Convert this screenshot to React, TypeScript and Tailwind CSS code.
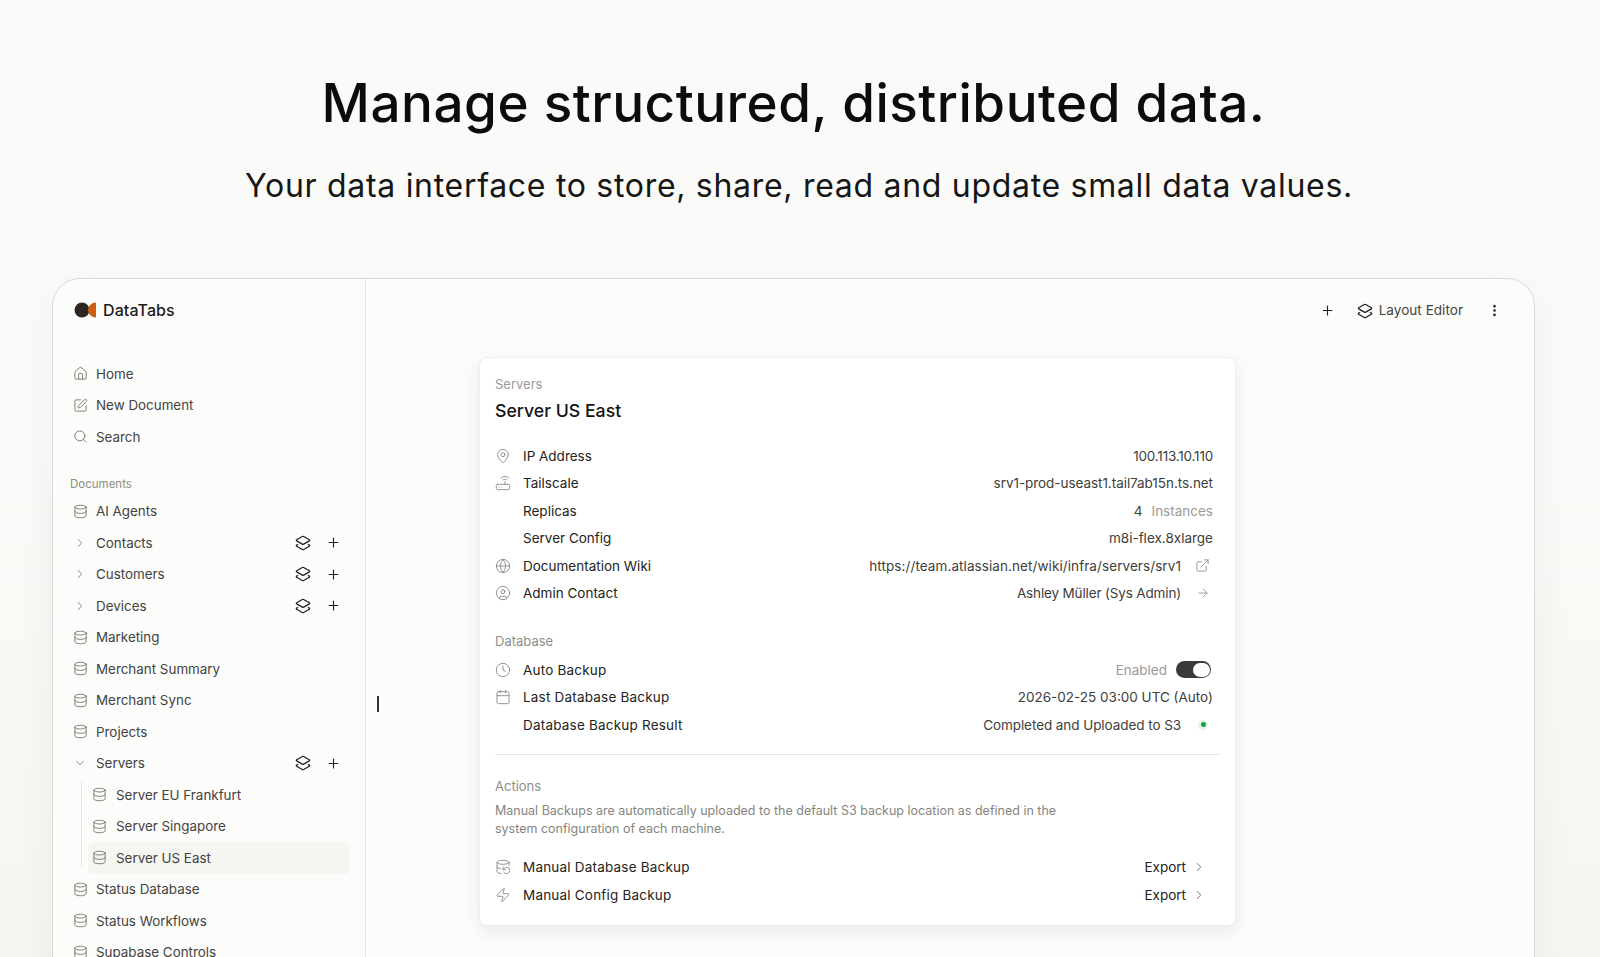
import React from "react";
import { House, SquarePen, Search, Database, ChevronRight, ChevronDown, Plus, MapPin, Router, Globe, CircleUser, ExternalLink, ArrowRight, Clock, Calendar, DatabaseBackup, Zap, EllipsisVertical, Layers2 } from "lucide-react";

const font = "font-['Inter',sans-serif]";

function NavRow({ icon: Icon, label, chevron, actions, indent, active }: any) {
  return (
    <div className={`relative flex h-[31.5px] items-center text-[13.4px] text-[#43433f] ${indent ? "pl-[9px]" : ""}`}>
      {active && <div className="absolute left-[5px] right-[15px] top-0 bottom-0 rounded-md bg-[#f5f5f1]" />}
      <span className={`relative flex w-[32px] shrink-0 justify-start ${indent ? "pl-[1px]" : ""}`}>
        <span className="ml-[-2px] flex w-[16px] justify-center">
          {Icon ? <Icon size={15} strokeWidth={1.5} className="text-[#77776f]" /> : chevron === "down" ? <ChevronDown size={14} strokeWidth={1.5} className="text-[#77776f]" /> : <ChevronRight size={14} strokeWidth={1.5} className="text-[#77776f]" />}
        </span>
      </span>
      <span className={`relative flex-1 ${indent ? "ml-[-8px]" : "ml-[-10px]"}`}>{label}</span>
      {actions && (
        <span className="relative mr-[24px] flex items-center gap-[15.5px] text-[#222220]">
          <Layers2 size={16} strokeWidth={1.9} />
          <Plus size={15} strokeWidth={1.8} />
        </span>
      )}
    </div>
  );
}

function Row({ icon: Icon, label, wide, children }: any) {
  return (
    <div className="flex h-[27.5px] items-center text-[13.5px]">
      <span className="ml-[-0.5px] mr-[1.5px] flex w-[27px] shrink-0">
        {Icon && <Icon size={16} strokeWidth={1.4} className="text-[#8d8d88]" />}
      </span>
      <span className={`flex-1 text-[#232321] ${wide ? "tracking-[0.2px]" : ""}`}>{label}</span>
      <span className="flex items-center text-[#40403b]">{children}</span>
    </div>
  );
}

export default function App() {
  return (
    <div className={`${font} relative flex h-[957px] flex-col items-center overflow-hidden bg-[#fafaf8]`}>
      <div className="absolute right-0 bottom-0 left-0 h-[500px] bg-gradient-to-b from-[#fafaf8] to-[#f5f5f2]" />
      <h1 className="relative mt-[69px] mr-[13px] text-[53px] leading-[68px] font-medium tracking-[0.5px] text-[#0c0c0c]">
        Manage structured, distributed data.
      </h1>
      <p className="relative mt-[27px] mr-[2px] text-[32px] leading-[44px] tracking-[0.7px] text-[#161616]">
        Your data interface to store, share, read and update small data values.
      </p>
      <div className="relative mt-[70px] ml-[52px] flex h-[800px] w-[1483px] shrink-0 self-start rounded-t-[28px] border border-[#d9d9d6] bg-[#fcfcfb] shadow-[0_10px_40px_rgba(0,0,0,0.05)]">
        <aside className="w-[313px] shrink-0 border-r border-[#e6e6e2] pl-[21px]">
          <div className="flex h-[61px] items-center gap-[6px]">
            <svg width="23" height="16" viewBox="0 0 23 16">
              <circle cx="8" cy="8" r="7.5" fill="#2d2523" />
              <path d="M22 0.5 V15.5 C18 15.5 14 12 14 8 C14 4 18 0.5 22 0.5 Z" fill="#cc5f12" />
            </svg>
            <span className="text-[16px] font-medium tracking-[0.1px] text-[#1c1c1a]">DataTabs</span>
          </div>
          <div className="mt-[18px]">
            <NavRow icon={House} label="Home" />
            <NavRow icon={SquarePen} label="New Document" />
            <NavRow icon={Search} label="Search" />
          </div>
          <div className="mt-[21px] mb-[2px] ml-[-4px] h-[20px] text-[11.5px] leading-[20px] text-[#8e8e88]">Documents</div>
          <NavRow icon={Database} label="AI Agents" />
          <NavRow chevron="right" label="Contacts" actions />
          <NavRow chevron="right" label="Customers" actions />
          <NavRow chevron="right" label="Devices" actions />
          <NavRow icon={Database} label="Marketing" />
          <NavRow icon={Database} label="Merchant Summary" />
          <NavRow icon={Database} label="Merchant Sync" />
          <NavRow icon={Database} label="Projects" />
          <NavRow chevron="down" label="Servers" actions />
          <div className="relative pl-[9px]">
            <div className="absolute top-[3px] bottom-[7px] left-[7px] w-px bg-[#e6e6e2]" />
            <NavRow icon={Database} label="Server EU Frankfurt" indent />
            <NavRow icon={Database} label="Server Singapore" indent />
            <NavRow icon={Database} label="Server US East" indent active />
          </div>
          <NavRow icon={Database} label="Status Database" />
          <NavRow icon={Database} label="Status Workflows" />
          <NavRow icon={Database} label="Supabase Controls" />
        </aside>
        <main className="relative flex-1">
          <div className="absolute top-[417px] left-[11px] h-[16px] w-[2px] bg-[#333]" />
          <div className="flex h-[61px] items-center justify-end pt-[2px] pr-[32px] text-[13.6px] text-[#43433f]">
            <Plus size={15} strokeWidth={1.8} className="mr-[1px] text-[#222220]" />
            <Layers2 size={16} strokeWidth={1.9} className="ml-[21px] text-[#222220]" />
            <span className="ml-[6px]">Layout Editor</span>
            <EllipsisVertical size={15} strokeWidth={2.2} className="ml-[24px] text-[#222220]" />
          </div>
          <section className="mt-[17px] ml-[113px] h-[569px] w-[757px] rounded-lg border border-[#eeeeeb] bg-white px-[15px] pt-[16px] shadow-[0_6px_20px_rgba(0,0,0,0.08)]">
            <div className="text-[13px] leading-[20px] text-[#9a9a95]">Servers</div>
            <div className="mt-[4px] text-[17.7px] leading-[26px] font-medium text-[#141414]">Server US East</div>
            <div className="mt-[18px] pr-[7px]">
              <Row icon={MapPin} label="IP Address"><span className="tracking-[-0.2px]">100.113.10.110</span></Row>
              <Row icon={Router} label="Tailscale"><span className="tracking-[-0.05px]">srv1-prod-useast1.tail7ab15n.ts.net</span></Row>
              <Row label="Replicas">4<span className="ml-[9px] text-[#9a9a95]">Instances</span></Row>
              <Row label="Server Config">m8i-flex.8xlarge</Row>
              <Row icon={Globe} label="Documentation Wiki"><span className="tracking-[0.08px]">https://team.atlassian.net/wiki/infra/servers/srv1</span><ExternalLink size={15} strokeWidth={1.4} className="mr-[3px] ml-[14px] text-[#8d8d88]" /></Row>
              <Row icon={CircleUser} label="Admin Contact"><span className="tracking-[-0.15px]">Ashley Müller (Sys Admin)</span><ArrowRight size={14} strokeWidth={1.4} className="mr-[3px] ml-[15px] text-[#8d8d88]" /></Row>
            </div>
            <div className="mt-[24px] text-[13px] leading-[20px] text-[#8e8e88]">Database</div>
            <div className="mt-[5px] pr-[7px]">
              <Row icon={Clock} label="Auto Backup" wide>
                <span className="text-[#9a9a95]">Enabled</span>
                <span className="mr-[2px] ml-[9px] flex h-[17px] w-[35px] items-center justify-end rounded-full bg-[#3a3a3a] pr-[1.5px]"><span className="h-[14px] w-[17px] rounded-full bg-white" /></span>
              </Row>
              <Row icon={Calendar} label="Last Database Backup" wide>2026-02-25 03:00 UTC (Auto)</Row>
              <Row label="Database Backup Result" wide><span className="tracking-[-0.07px]">Completed and Uploaded to S3</span><span className="relative mr-[5px] ml-[17px] flex h-[10px] w-[10px] items-center justify-center rounded-full bg-[#e6f5e6]"><span className="h-[5px] w-[5px] rounded-full bg-[#16a34a]" /></span></Row>
            </div>
            <div className="mt-[15px] h-px bg-[#e6e6e2]" />
            <div className="mt-[21px] text-[13px] leading-[20px] text-[#8e8e88]">Actions</div>
            <p className="mt-[6px] w-[590px] text-[12.5px] leading-[18px] text-[#85857e]">Manual Backups are automatically uploaded to the default S3 backup location as defined in the system configuration of each machine.</p>
            <div className="mt-[16px] pr-[14px]">
              <Row icon={DatabaseBackup} label="Manual Database Backup" wide><span className="text-[#232321]">Export</span><ChevronRight size={14} strokeWidth={1.5} className="ml-[6px] text-[#66665f]" /></Row>
              <Row icon={Zap} label="Manual Config Backup" wide><span className="text-[#232321]">Export</span><ChevronRight size={14} strokeWidth={1.5} className="ml-[6px] text-[#66665f]" /></Row>
            </div>
          </section>
        </main>
      </div>
    </div>
  );
}
